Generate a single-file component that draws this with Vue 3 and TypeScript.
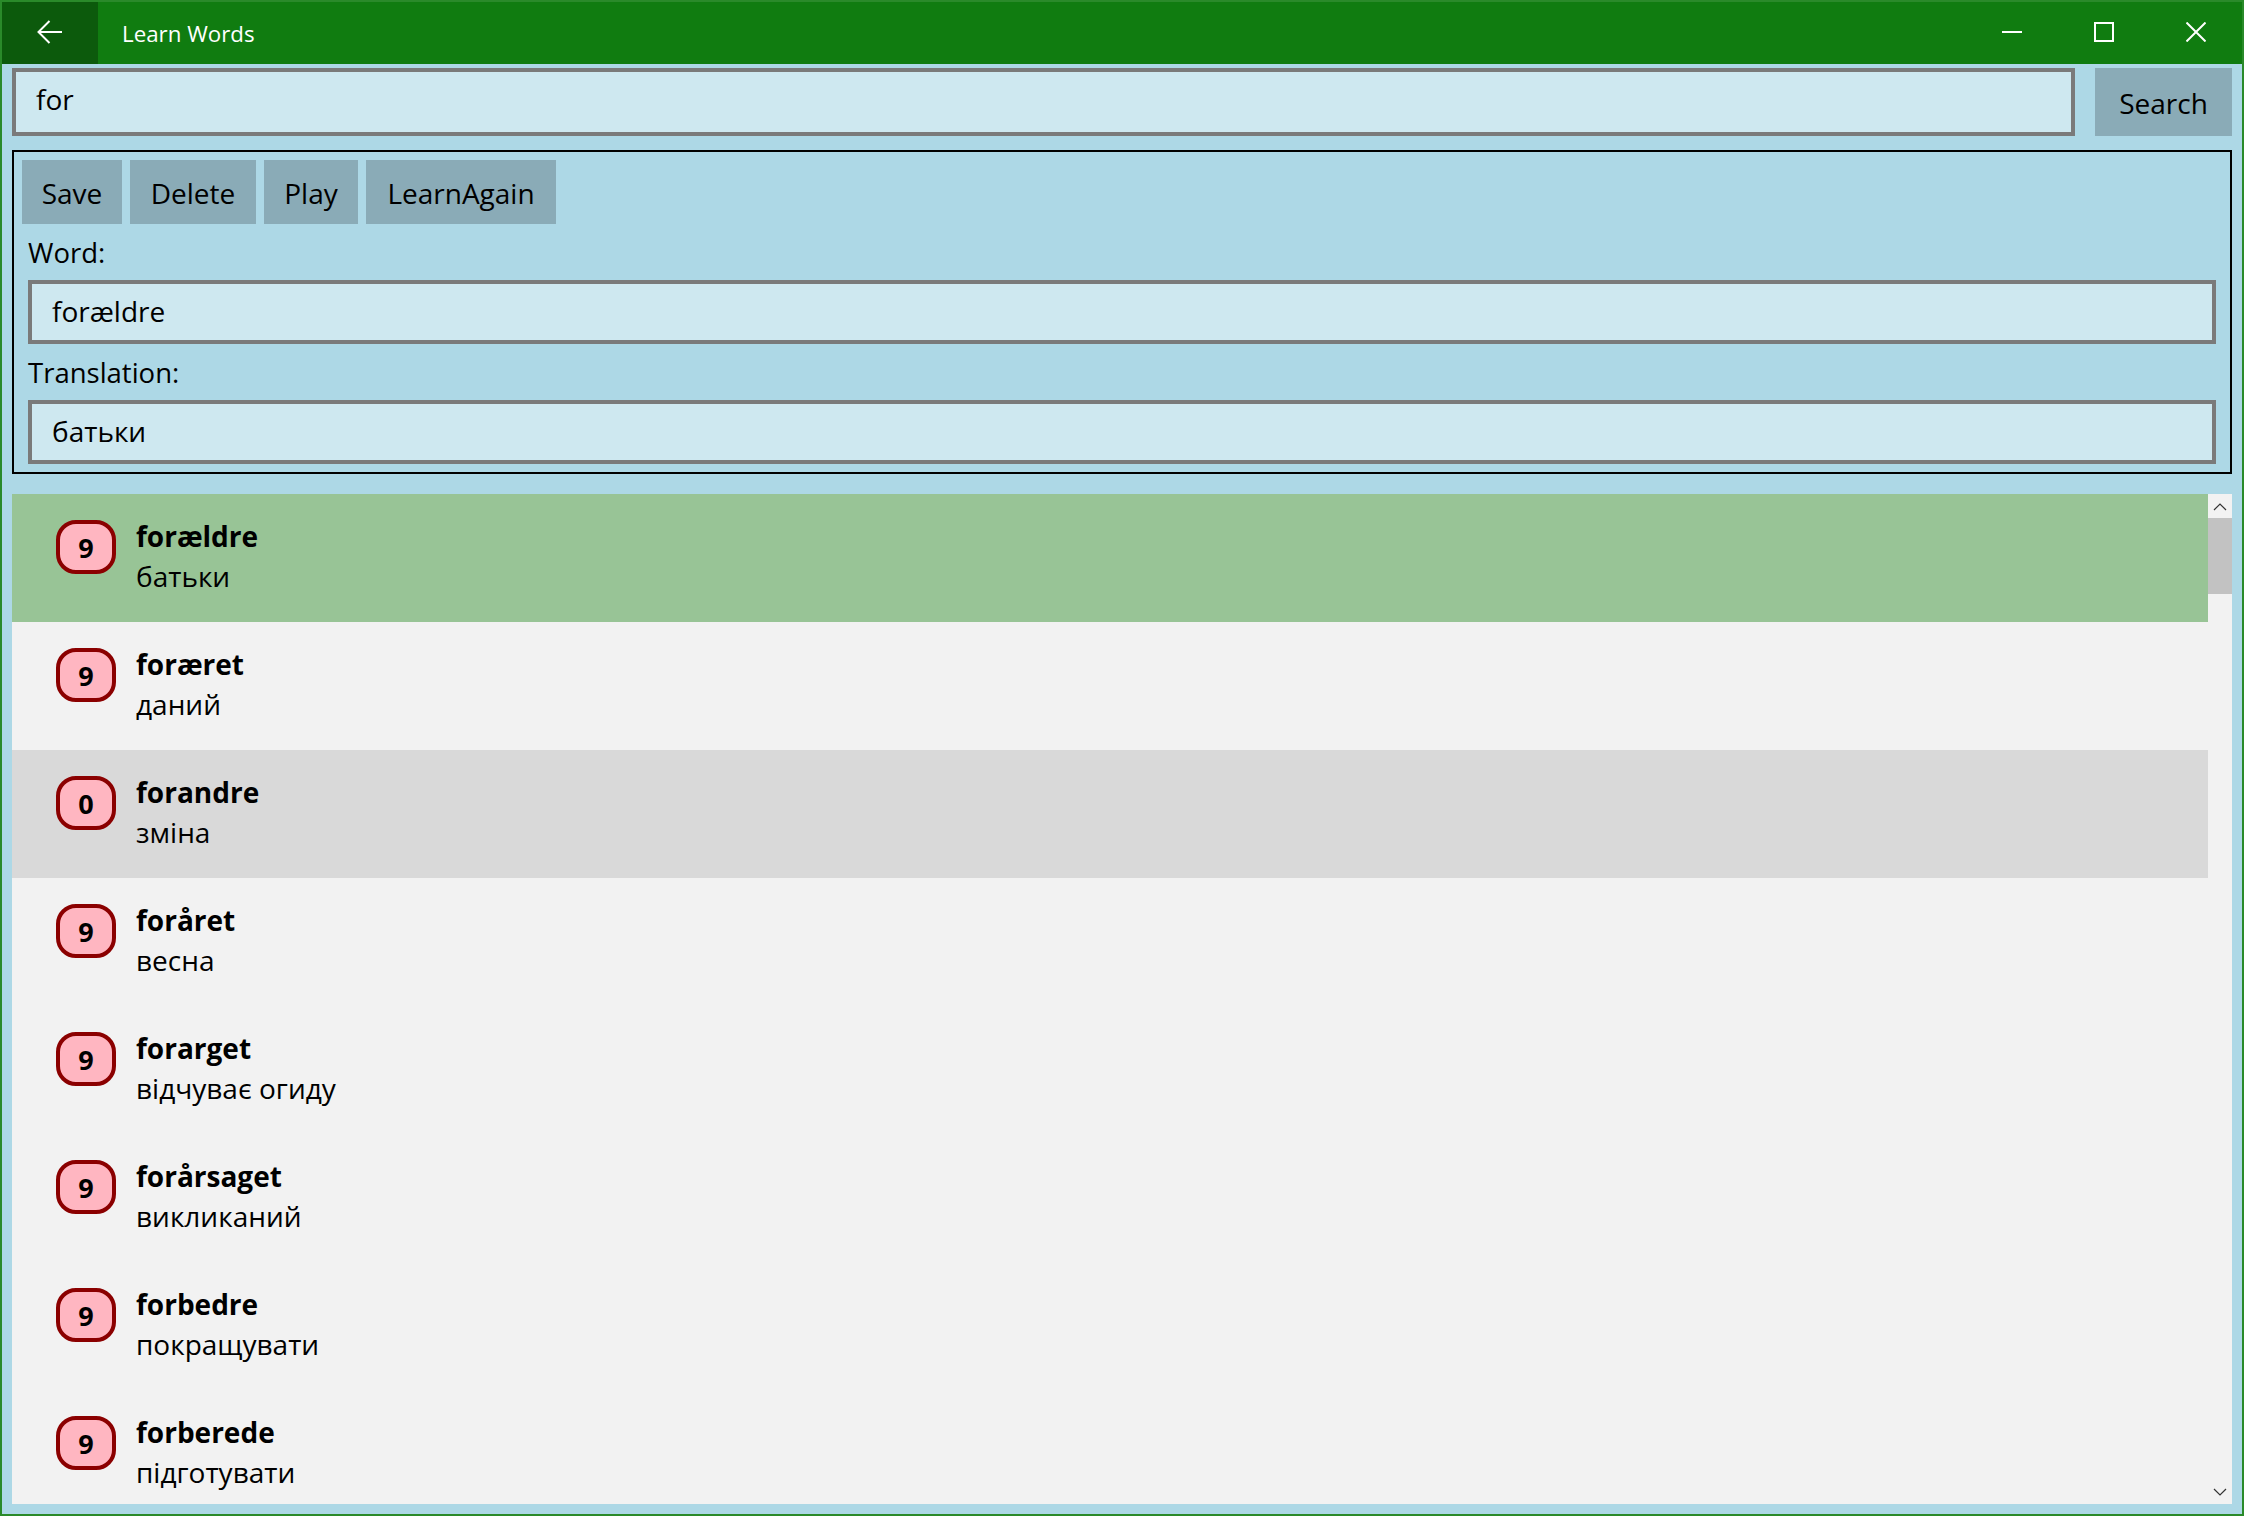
<script setup lang="ts">
interface Entry {
  score: number
  word: string
  translation: string
  state?: 'selected' | 'hover'
}

const actions: string[] = ['Save', 'Delete', 'Play', 'LearnAgain']

const entries: Entry[] = [
  { score: 9, word: 'forældre', translation: 'батьки', state: 'selected' },
  { score: 9, word: 'foræret', translation: 'даний' },
  { score: 0, word: 'forandre', translation: 'зміна', state: 'hover' },
  { score: 9, word: 'foråret', translation: 'весна' },
  { score: 9, word: 'forarget', translation: 'відчуває огиду' },
  { score: 9, word: 'forårsaget', translation: 'викликаний' },
  { score: 9, word: 'forbedre', translation: 'покращувати' },
  { score: 9, word: 'forberede', translation: 'підготувати' },
]
</script>

<template>
  <div class="window">
    <header class="titlebar">
      <button class="back" aria-label="Back">
        <svg width="26" height="24" viewBox="0 0 26 24" fill="none" stroke="#fff" stroke-width="2">
          <path d="M1.5 12H25M12.5 1 1.5 12l11 11" />
        </svg>
      </button>
      <div class="app-title">Learn Words</div>
      <div class="caption">
        <span class="cap-btn">
          <svg width="20" height="20" viewBox="0 0 20 20" fill="none" stroke="#fff" stroke-width="2"><path d="M0 10h20" /></svg>
        </span>
        <span class="cap-btn">
          <svg width="20" height="20" viewBox="0 0 20 20" fill="none" stroke="#fff" stroke-width="2"><rect x="1" y="1" width="18" height="18" /></svg>
        </span>
        <span class="cap-btn">
          <svg width="20" height="20" viewBox="0 0 20 20" fill="none" stroke="#fff" stroke-width="2"><path d="M0.5 0.5l19 19M19.5 0.5l-19 19" /></svg>
        </span>
      </div>
    </header>

    <main class="content">
      <div class="search-row">
        <div class="field search-field">for</div>
        <button class="btn search-btn">Search</button>
      </div>

      <section class="editor">
        <div class="actions">
          <button v-for="a in actions" :key="a" class="btn">{{ a }}</button>
        </div>
        <div class="label">Word:</div>
        <div class="field">forældre</div>
        <div class="label">Translation:</div>
        <div class="field">батьки</div>
      </section>

      <section class="list-wrap">
        <div class="list">
          <div
            v-for="e in entries"
            :key="e.word"
            class="item"
            :class="e.state"
          >
            <div class="badge">{{ e.score }}</div>
            <div class="texts">
              <div class="word">{{ e.word }}</div>
              <div class="translation">{{ e.translation }}</div>
            </div>
          </div>
        </div>
        <div class="scrollbar">
          <div class="arrow">
            <svg width="14" height="9" viewBox="0 0 14 9" fill="none" stroke="#333" stroke-width="1.2"><path d="M1 8l6-6 6 6" /></svg>
          </div>
          <div class="thumb"></div>
          <div class="track"></div>
          <div class="arrow">
            <svg width="14" height="9" viewBox="0 0 14 9" fill="none" stroke="#333" stroke-width="1.2"><path d="M1 1l6 6 6-6" /></svg>
          </div>
        </div>
      </section>
    </main>
  </div>
</template>

<style>
html, body { margin: 0; padding: 0; }
</style>

<style scoped>
.window {
  width: 2244px;
  height: 1516px;
  box-sizing: border-box;
  border: 2px solid #2a8a2a;
  background: #add8e6;
  display: flex;
  flex-direction: column;
  overflow: hidden;
  font-family: "Open Sans", "Noto Sans", sans-serif;
  color: #000;
}
.titlebar {
  height: 62px;
  flex: none;
  background: #107c10;
  display: flex;
  align-items: center;
  color: #fff;
}
.back {
  width: 96px;
  height: 62px;
  border: 0;
  padding: 0 0 2px;
  background: #0c5a0c;
  display: flex;
  align-items: center;
  justify-content: center;
}
.app-title {
  margin-left: 24px;
  font-size: 22.3px;
  flex: 1;
}
.caption { display: flex; }
.cap-btn {
  width: 92px;
  height: 62px;
  box-sizing: border-box;
  padding-bottom: 2px;
  display: flex;
  align-items: center;
  justify-content: center;
}
.content {
  flex: 1;
  min-height: 0;
  display: flex;
  flex-direction: column;
  padding: 4px 10px 10px;
}
.search-row {
  display: flex;
  gap: 20px;
  height: 68px;
  flex: none;
}
.field {
  box-sizing: border-box;
  height: 64px;
  border: 4px solid #7a7a7a;
  background: #cee8f0;
  padding: 0 20px;
  font-size: 28px;
  line-height: 54px;
}
.search-field {
  flex: 1;
  height: 68px;
}
.btn {
  border: 0;
  background: #8aabb7;
  font: inherit;
  font-size: 28px;
  color: #000;
  padding: 2px 0 0;
}
.search-btn { width: 137px; }
.editor {
  flex: none;
  box-sizing: border-box;
  height: 324px;
  margin-top: 14px;
  border: 2px solid #000;
  padding: 8px 14px;
}
.actions {
  display: grid;
  grid-template-columns: 100px 126px 94px 190px;
  gap: 8px;
  height: 64px;
  margin-left: -6px;
}
.label {
  height: 56px;
  font-size: 27.5px;
  line-height: 36px;
  padding-top: 11px;
  box-sizing: border-box;
}
.list-wrap {
  flex: 1;
  min-height: 0;
  margin-top: 20px;
  background: #f2f2f2;
  display: flex;
}
.list {
  flex: 1;
  overflow: hidden;
}
.item {
  height: 128px;
  box-sizing: border-box;
  padding: 26px 0 0 44px;
  display: flex;
  gap: 20px;
}
.item.selected { background: #98c496; }
.item.hover { background: #d9d9d9; }
.badge {
  box-sizing: border-box;
  width: 60px;
  height: 54px;
  border: 4px solid #8b0000;
  border-radius: 20px;
  background: #ffb6c1;
  font-size: 27px;
  font-weight: 700;
  line-height: 48px;
  text-align: center;
}
.texts { margin-top: -4px; }
.word {
  font-size: 28px;
  font-weight: 700;
  line-height: 40px;
}
.translation {
  font-size: 28px;
  line-height: 40px;
}
.scrollbar {
  width: 24px;
  flex: none;
  display: flex;
  flex-direction: column;
}
.arrow {
  height: 24px;
  display: flex;
  align-items: center;
  justify-content: center;
}
.thumb { height: 76px; background: #c2c2c2; }
.track { flex: 1; }
</style>
